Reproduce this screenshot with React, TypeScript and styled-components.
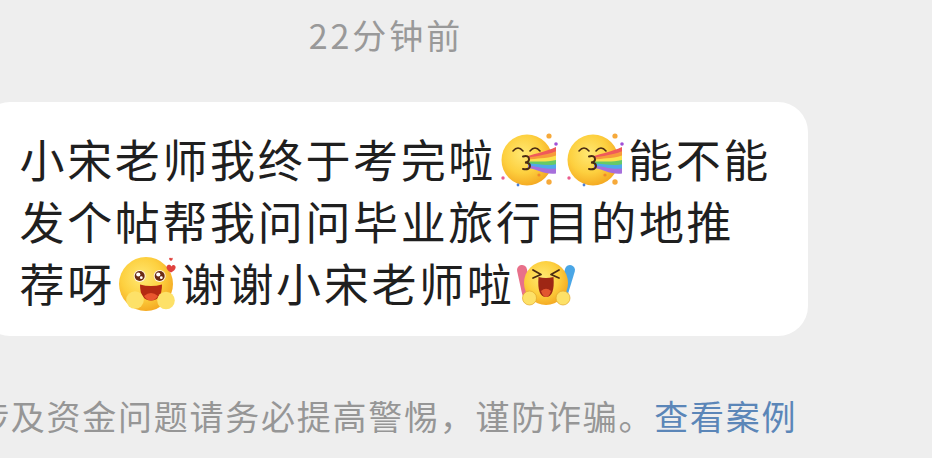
import React from "react";
import styled, { createGlobalStyle } from "styled-components";

const Global = createGlobalStyle`
  html, body { margin: 0; padding: 0; background: #eeeeee; }
  #root { width: 932px; height: 458px; }
`;

const Page = styled.main`
  width: 932px;
  height: 458px;
  overflow: hidden;
  background: #eeeeee;
  display: flex;
  flex-direction: column;
  font-family: "Noto Sans CJK SC", "Noto Sans", sans-serif;
`;

const Time = styled.div`
  height: 102px;
  box-sizing: border-box;
  padding: 12px 160px 0 0;
  text-align: center;
  font-size: 34px;
  line-height: 46px;
  letter-spacing: 3px;
  color: #999;
`;

const Bubble = styled.section`
  width: 828px;
  height: 234px;
  margin-left: -20px;
  box-sizing: border-box;
  padding: 25px 0 0 39.500px;
  background: #fff;
  border-radius: 30px;
  flex: none;
`;

const Line = styled.div`
  height: 62px;
  display: flex;
  align-items: center;
  white-space: nowrap;
  font-size: 45px;
  letter-spacing: 2.65px;
  color: #1f1f1f;
`;

const EmojiSvg = styled.svg`
  width: 66px;
  height: 66px;
  flex: none;
  margin: 2px 0 -2px -1px;
  padding-right: 1px;
  box-sizing: content-box;
`;

const Notice = styled.p`
  margin: 60px 0 0 -25px;
  white-space: nowrap;
  font-size: 34px;
  line-height: 40px;
  letter-spacing: 1.75px;
  color: #969696;
`;

const CaseLink = styled.span`
  color: #5b86b8;
`;

const Face = ({ id, cx = 32, cy = 33, r = 25.5 }: { id: string; cx?: number; cy?: number; r?: number }) => (
  <>
    <defs>
      <radialGradient id={id} cx="0.42" cy="0.38" r="0.68">
        <stop offset="0" stopColor="#ffe873" />
        <stop offset="0.55" stopColor="#fdd03f" />
        <stop offset="1" stopColor="#f3a31d" />
      </radialGradient>
    </defs>
    <circle cx={cx} cy={cy} r={r} fill={`url(#${id})`} />
  </>
);

const RainbowEmoji = ({ id }: { id: string }) => {
  const bands = ["#ef5a5a", "#f79a3c", "#fbe14d", "#66c968", "#4fa9ea", "#a66fdc"];
  return (
    <EmojiSvg viewBox="0 0 66 66">
      <Face id={id} />
      <path d="M18 24q5-6 10 0M35 24q5-6 10 0" fill="none" stroke="#4a2a12" strokeWidth="1.6" strokeLinecap="round" />
      {bands.map((c, i) => (
        <path
          key={c}
          d={`M33 ${29 + i * 1.9}C42 ${26 + i * 2.6} 50 ${25 + i * 3.6} 61 ${20 + i * 4.3}L61 ${25 + i * 4.3}C50 ${30 + i * 3.6} 42 ${29 + i * 2.6} 33 ${31.500 + i * 1.9}Z`}
          fill={c}
        />
      ))}
      <path d="M28 29.500q6-1.500 6 2.800q0 3-4 3.200q5 .2 5 3.500q0 4-7 3" fill="none" stroke="#4a2a12" strokeWidth="2" strokeLinecap="round" />
      <circle cx="54" cy="9" r="2.600" fill="#f6a93a" />
      <circle cx="61" cy="17" r="1.800" fill="#a04fd8" />
      <circle cx="8" cy="51" r="1.700" fill="#ea5d8f" />
      <circle cx="23" cy="58" r="1.400" fill="#4b7fd8" />
      <circle cx="54" cy="55" r="2.700" fill="#f6a93a" />
      <circle cx="44" cy="48" r="1.600" fill="#f08a2c" />
    </EmojiSvg>
  );
};

const Eye = ({ cx, cy }: { cx: number; cy: number }) => (
  <>
    <circle cx={cx} cy={cy} r="6" fill="#fff3df" />
    <circle cx={cx} cy={cy} r="5" fill="#6b2b14" />
    <circle cx={cx - 1.400} cy={cy - 1.500} r="2.100" fill="#fff" />
    <circle cx={cx + 1.600} cy={cy + 1.700} r="1.400" fill="#fff" />
  </>
);

const SmileEmoji = ({ id }: { id: string }) => (
  <EmojiSvg viewBox="0 0 66 66">
    <Face id={id} cx={32} cy={33} r={27} />
    <Eye cx={25.700} cy={25} />
    <Eye cx={45.700} cy={25} />
    <path d="M26 33.500Q37 36.500 48 33.500Q48 49.500 37 49.500Q26 49.500 26 33.500Z" fill="#b42a12" />
    <path d="M30 45Q37 39 44 45Q41 49.500 37 49.500Q33 49.500 30 45Z" fill="#e9562e" />
    <circle cx="21" cy="49" r="8.800" fill="#fde168" />
    <circle cx="52" cy="49.500" r="8.800" fill="#fde168" />
    <path d="M57 21.500c-5-2.500-5.500-6.500-3-7.500c1.500-.5 3 .2 3.400 1.500c1-1.500 2.600-1.800 3.600-.8c1.800 2-.4 5-4 6.800Z" fill="#e0423e" />
    <path d="M57 10c-2-1-2.400-2.700-1.200-3.200c.6-.2 1.100 0 1.300 .6c.4-.6 1-.7 1.400-.3c.7 .8-.1 2-1.500 2.900Z" fill="#e0423e" />
  </EmojiSvg>
);

const CheerEmoji = ({ id }: { id: string }) => (
  <EmojiSvg viewBox="0 0 66 66">
    <path d="M9 19L14 42" stroke="#e8708a" strokeWidth="10" strokeLinecap="round" />
    <path d="M57 19L50 42" stroke="#4aa6e6" strokeWidth="10" strokeLinecap="round" />
    <Face id={id} cx={33} cy={32} r={22} />
    <path d="M20 19l8 4.500l-8 3.500M46 19l-8 4.500l8 3.500" fill="none" stroke="#4a2a12" strokeWidth="1.800" strokeLinecap="round" strokeLinejoin="round" />
    <path d="M25.500 26Q33 28 40.500 26Q42 46 33 46Q24 46 25.500 26Z" fill="#9e2614" />
    <path d="M28 40Q33 35.500 38 40Q36 46 33 46Q30 46 28 40Z" fill="#e2552f" />
    <circle cx="16.500" cy="47" r="7" fill="#fde168" stroke="#e3a72a" strokeWidth=".7" />
    <circle cx="50" cy="47" r="7" fill="#fde168" stroke="#e3a72a" strokeWidth=".7" />
  </EmojiSvg>
);

export default function App() {
  return (
    <Page>
      <Global />
      <Time>22分钟前</Time>
      <Bubble>
        <Line>
          小宋老师我终于考完啦
          <RainbowEmoji id="face-a" />
          <RainbowEmoji id="face-b" />
          能不能
        </Line>
        <Line>发个帖帮我问问毕业旅行目的地推</Line>
        <Line>
          荐呀
          <SmileEmoji id="face-c" />
          谢谢小宋老师啦
          <CheerEmoji id="face-d" />
        </Line>
      </Bubble>
      <Notice>
        涉及资金问题请务必提高警惕，谨防诈骗。<CaseLink>查看案例</CaseLink>
      </Notice>
    </Page>
  );
}
